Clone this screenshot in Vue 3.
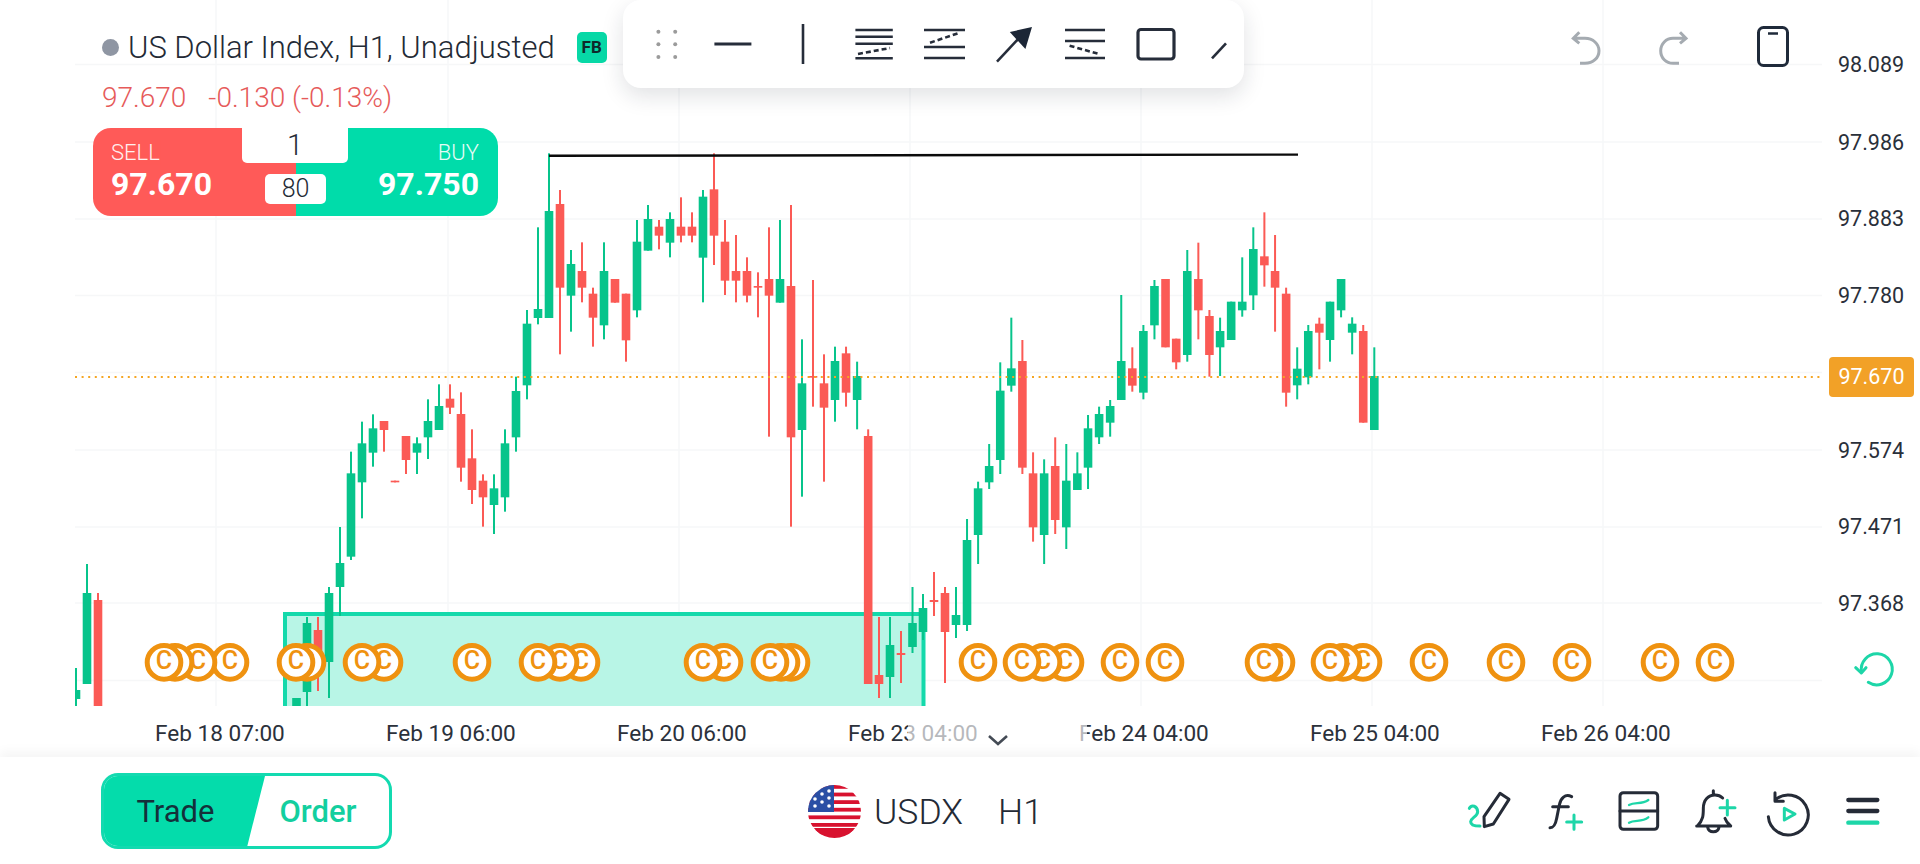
<script setup>
const z9 = [
[33,'g',935,1000,1250,1260],[66,'g',845,910,1027,1135],[99,'g',823,865,938,980],[132,'r',843,843,870,935],[165,'r',1022,1022,1027,1027],[198,'r',888,888,960,1002],[231,'g',892,910,938,1002],[264,'g',778,843,892,957],[297,'g',733,798,870,870],[330,'r',733,776,803,822],[363,'r',757,822,983,1025],[396,'r',868,955,1050,1092],[429,'r',1003,1022,1072,1160],[462,'g',1003,1045,1095,1182],[495,'g',868,910,1072,1115],[528,'g',710,753,892,935],[561,'g',510,551,736,778],[594,'g',262,507,534,553],[627,'g',40,213,534,534],[660,'r',150,192,443,643],[693,'g',330,372,467,575],[726,'r',307,393,443,487],[759,'r',443,461,533,620],[792,'g',307,393,556,598],[825,'r',417,417,488,488],[858,'r',461,461,601,665],[891,'g',240,305,511,532],[924,'g',195,237,332,332],[957,'r',240,260,287,328],[990,'g',217,237,308,352],[1023,'r',172,260,287,307],[1056,'r',217,260,287,307],[1089,'g',150,170,353,487],[1122,'r',40,148,287,375],[1155,'r',240,305,422,465],[1188,'r',285,393,422,487],[1221,'r',352,393,467,487],[1254,'r',397,438,443,532],[1287,'r',262,417,467,890],[1320,'g',240,417,488,488],[1353,'r',195,438,892,1160],[1386,'g',598,730,870,1070],[1419,'r',420,708,713,800],[1452,'r',643,730,803,1025],[1485,'g',620,663,780,845]
]
const z10 = [
[167,'r',620,640,758,800],[195,'g',665,708,780,868],[223,'r',868,888,1632,1632],
[473,'g',1137,1200,1455,1473],[501,'g',1025,1045,1185,1272],[529,'g',912,978,1027,1047],[557,'g',667,752,960,1002],[585,'g',533,685,737,755],[613,'r',600,663,983,1002],[640,'r',937,1000,1162,1205],[668,'g',958,1000,1185,1272],[696,'r',892,978,1140,1182],[724,'g',912,1022,1162,1227],[752,'g',937,1000,1050,1050],[779,'g',825,865,983,1047],[807,'g',800,822,892,912],[835,'g',780,798,848,890],[863,'g',465,663,780,780],[891,'r',622,685,737,755],[919,'g',555,573,758,778],[947,'g',420,438,556,598],[975,'r',417,417,622,622],[1002,'r',596,596,667,688],[1030,'g',330,393,645,665],[1058,'r',308,417,511,598],[1086,'r',510,528,645,710],[1113,'g',533,573,622,708],[1141,'g',485,485,600,600],[1169,'g',352,485,511,530],[1197,'g',262,327,466,510],[1225,'r',217,349,376,440],[1252,'r',285,393,443,575],[1280,'r',443,461,758,800],[1308,'g',622,686,736,778],[1336,'g',555,573,712,733],[1364,'r',533,551,578,688],[1391,'g',485,485,600,665],[1419,'g',417,417,511,532],[1447,'g',532,551,578,643],[1475,'r',555,573,848,848],[1503,'g',622,708,870,870]
]
const direct = [
[76,'g',668,690,699,706],[87,'g',564,593,684,684],[98,'r',593,600,706,706],
[296.5,'g',698,698,706,706],[307,'g',617,623,692,706],[318,'r',617,630,660,691],[329,'g',587,593,662,698],[340,'g',527,563,587,616],
[879,'r',617,675,684,698],[890,'g',617,645,677,698],[901,'r',631,653,655,683],[912.5,'g',587,623,647,653],[923,'g',594,608,632,640],[934,'r',572,600,602,616],[945,'r',587,593,632,683],[956,'g',587,615,625,638]
]
const toC = ([x, c, wt, bt, bb, wb]) => ({ x, c, wt, bt, bb, wb })
const candles = [
  ...direct.map(toC),
  ...z9.map(([zx, c, a, b, d, e]) => toC([340 + zx / 3, c, 140 + a / 3, 140 + b / 3, 140 + d / 3, 140 + e / 3])),
  ...z10.map(([zx, c, a, b, d, e]) => toC([780 + zx / 2.529, c, 140 + a / 3, 140 + b / 3, 140 + d / 3, 140 + e / 3]))
]
const colors = { g: '#07c48b', r: '#fb5a55' }
const hGrid = [64.5, 142, 219, 295.5, 372.5, 450, 527, 603, 680.5]
const vGrid = [216, 448, 679, 910, 1141, 1372, 1603]
const prices = [['98.089', 64], ['97.986', 142], ['97.883', 218], ['97.780', 295], ['97.574', 450], ['97.471', 526], ['97.368', 603]]
const dates = [['Feb 18 07:00', 155], ['Feb 19 06:00', 386], ['Feb 20 06:00', 617], ['Feb 23 04:00', 848], ['Feb 24 04:00', 1079], ['Feb 25 04:00', 1310], ['Feb 26 04:00', 1541]]
const marks = [164, 175, 198, 230, 296, 307, 362, 384, 472, 538, 560, 581, 703, 724, 770, 781, 791, 978, 1022, 1043, 1065, 1120, 1165, 1264, 1276, 1330, 1343, 1363, 1429, 1506, 1572, 1660, 1715].reverse()
const flagStripes = [0, 1, 2, 3, 4, 5, 6]
</script>

<template>
  <div class="page">
    <section class="chart">
      <svg class="plot" width="1920" height="757" viewBox="0 0 1920 757">
        <defs>
          <clipPath id="plot-area"><rect x="75" y="0" width="1747" height="706" /></clipPath>
        </defs>
        <g class="grid">
          <line v-for="y in hGrid" :key="'h' + y" x1="75" x2="1822" :y1="y" :y2="y" />
          <line v-for="x in vGrid" :key="'v' + x" :x1="x" :x2="x" y1="0" y2="706" />
        </g>
        <g clip-path="url(#plot-area)">
          <rect class="zone" x="285" y="614" width="638.5" height="100" />
          <g v-for="(k, i) in candles" :key="i" :fill="colors[k.c]">
            <rect :x="k.x - 1" :y="k.wt" width="2" :height="k.wb - k.wt" />
            <rect :x="k.x - 4.3" :y="k.bt" width="8.6" :height="k.bb - k.bt" />
          </g>
          <line class="hline" x1="549" y1="155.8" x2="1298" y2="154.6" />
          <line class="last" x1="75" x2="1822" y1="377" y2="377" />
          <g v-for="(x, i) in marks" :key="'m' + i">
            <circle class="mark" :cx="x" cy="662.4" r="16.8" />
            <text class="mark-c" :x="x" y="669.3">C</text>
          </g>
        </g>
        <text v-for="p in prices" :key="p[0]" class="price" x="1838" :y="p[1] + 7.5">{{ p[0] }}</text>
        <text v-for="d in dates" :key="d[0]" class="date" :x="d[1]" y="740.8">{{ d[0] }}</text>
        <g class="reset">
          <path d="M1861.5 672 A15.5 15.5 0 1 1 1868.3 682.3" />
          <path d="M1855.7 667.7 L1861.3 673 L1866 667.7" />
        </g>
      </svg>

      <div class="legend">
        <div class="title">
          <span class="dot"></span>
          <span class="name">US Dollar Index, H1, Unadjusted</span>
          <span class="fb">FB</span>
        </div>
        <div class="change"><span>97.670</span><span>-0.130 (-0.13%)</span></div>
        <div class="trade">
          <div class="side sell"><small>SELL</small><b>97.670</b></div>
          <div class="side buy"><small>BUY</small><b>97.750</b></div>
          <div class="lot">1</div>
          <div class="spread">80</div>
        </div>
      </div>

      <svg class="tools" width="621" height="88" viewBox="623 0 621 88">
        <g fill="#9b9b9b">
          <circle cx="658.4" cy="31.7" r="2" /><circle cx="675.2" cy="31.7" r="2" />
          <circle cx="658.4" cy="44.3" r="2" /><circle cx="675.2" cy="44.3" r="2" />
          <circle cx="658.4" cy="57" r="2" /><circle cx="675.2" cy="57" r="2" />
        </g>
        <g class="ink">
          <path class="bold" d="M714.4 44H751.4" />
          <path d="M803 24V64" />
          <path d="M855.4 30H892.8M855.4 36.7H892.8M855.4 43.7H892.8M855.4 58.3H892.8" />
          <path class="dash" d="M858 54L890 48" />
          <path d="M924 30H965M924 47H965M924 58H965" />
          <path class="dash" d="M930 42.7L959 33" />
          <path d="M997 61.7L1020 37" />
          <path class="solid" d="M1009.8 32L1032 27L1025.4 49Z" />
          <path d="M1065 30H1105M1065 41H1105M1065 58H1105" />
          <path class="dash" d="M1069.6 45.7L1100 54.3" />
          <rect class="bold" x="1138" y="29.5" width="36" height="29.5" rx="3" />
          <path d="M1212 58.3L1226 43.3" />
        </g>
      </svg>

      <svg class="history" width="140" height="40" viewBox="1560 27 140 40">
        <g class="soft">
          <path d="M1579.3 32.3L1573.3 38.3L1579.3 43.3M1573.3 38.3H1585C1593 38.3 1599 44 1599 50.7C1599 58 1593 63.3 1585 63.3H1580" />
          <path d="M1680 32.3L1686 38.3L1680 43.3M1686 38.3H1673C1666 38.3 1660.7 44 1660.7 50.7C1660.7 58 1666 63.3 1673 63.3H1679" />
        </g>
      </svg>
      <svg class="phone" width="32" height="41" viewBox="0 0 32 41">
        <rect x="1.5" y="1.5" width="29" height="38" rx="5" fill="none" stroke="#1f2a3a" stroke-width="3" />
        <path d="M11 7.5H21" stroke="#1f2a3a" stroke-width="2.5" />
      </svg>

      <div class="badge">97.670</div>
      <div class="handle">
        <svg width="22" height="12" viewBox="0 0 22 12"><path d="M2 2L11 10L20 2" fill="none" stroke="#444b55" stroke-width="2.6" /></svg>
      </div>
    </section>

    <footer class="bar">
      <div class="toggle">
        <div class="seg seg-trade"><span>Trade</span></div>
        <div class="seg seg-order"><span>Order</span></div>
      </div>
      <div class="symbol">
        <svg width="53" height="53" viewBox="0 0 53 53">
          <defs><clipPath id="flag"><ellipse cx="26.5" cy="26.5" rx="26.5" ry="26.5" /></clipPath></defs>
          <g clip-path="url(#flag)">
            <rect width="53" height="53" fill="#fff" />
            <rect v-for="s in flagStripes" :key="s" x="0" :y="s * 7.6" width="53" height="3.8" fill="#d8122f" />
            <rect x="0" y="43" width="53" height="10" fill="#d8122f" />
            <rect x="0" y="0" width="26" height="27" fill="#2a4fa5" />
            <g fill="#fff">
              <circle cx="21" cy="6" r="1.8" /><circle cx="14" cy="9" r="1.8" /><circle cx="21" cy="13" r="1.8" />
              <circle cx="7" cy="14" r="1.8" /><circle cx="14" cy="17" r="1.8" /><circle cx="21" cy="21" r="1.8" /><circle cx="7" cy="21" r="1.8" />
            </g>
          </g>
        </svg>
        <span class="sym">USDX</span>
        <span class="tf">H1</span>
      </div>
      <svg class="actions" width="480" height="107" viewBox="0 51 1440 321">
        <g class="dark">
          <path d="M180 160L207 178L160 252L133 260L132 230Z" />
          <path d="M395 170C375 160 362 175 358 195L350 235C346 258 340 263 330 263M338 200H385" />
          <rect x="540" y="158" width="113" height="110" rx="10" />
          <path d="M540 213H653" />
          <path d="M772 258C790 240 790 225 790 205C790 180 805 165 825 165C835 165 842 168 848 174M855 235C858 245 865 252 872 258M770 258H872M820 152V165M803 262C806 280 834 280 837 262" />
          <path d="M1005 180A60 60 0 1 1 985 230M1005 158V184H1030" />
          <path class="bar-line" d="M1225 180H1312M1225 213H1312" />
        </g>
        <g class="accent">
          <path d="M88 205C95 192 112 198 113 215C113 230 93 232 92 245C92 256 105 258 120 258" />
          <path d="M380 246H425M402 225V268" />
          <path class="thin" d="M567 195C585 185 605 195 625 180M567 248C585 238 605 248 625 232" />
          <path d="M840 203H885M862 181V225" />
          <path d="M1033 205L1065 222L1033 240Z" />
          <path class="bar-line" d="M1225 248H1312" />
        </g>
      </svg>
    </footer>
  </div>
</template>

<style scoped>
.page {
  width: 1920px;
  height: 864px;
  background: #fff;
  overflow: hidden;
  font-family: Roboto, "Liberation Sans", sans-serif;
  color: #232a35;
}
.chart {
  position: relative;
  height: 757px;
}
.plot {
  display: block;
}
.grid line {
  stroke: #f6f7f8;
  stroke-width: 1.5;
}
.zone {
  fill: #b8f5e6;
  stroke: #14d9ab;
  stroke-width: 4;
}
.hline {
  stroke: #0b0b0b;
  stroke-width: 2.4;
}
.last {
  stroke: #f5a623;
  stroke-width: 2;
  stroke-dasharray: 2 4.6;
}
.mark {
  fill: #fff;
  stroke: #ef9210;
  stroke-width: 5;
}
.mark-c {
  fill: #ef9210;
  font-size: 25px;
  font-weight: 500;
  text-anchor: middle;
}
.price {
  fill: #2a303a;
  font-size: 21.5px;
  font-weight: 400;
}
.date {
  fill: #2b313b;
  font-size: 22.6px;
  font-weight: 400;
}
.reset path {
  fill: none;
  stroke: #1dd6a8;
  stroke-width: 3;
  stroke-linecap: round;
  stroke-linejoin: round;
}
.legend {
  position: absolute;
  left: 93px;
  top: 27px;
  width: 520px;
}
.title {
  display: flex;
  align-items: center;
  height: 40px;
  padding-left: 9px;
}
.dot {
  width: 17px;
  height: 17px;
  border-radius: 50%;
  background: #8f96a3;
  margin-right: 9px;
}
.name {
  font-size: 31px;
  font-weight: 300;
  color: #232a35;
  white-space: nowrap;
}
.fb {
  width: 30px;
  height: 31px;
  margin-left: 22px;
  border-radius: 5px;
  background: #07d8a6;
  color: #0e2a2b;
  font-size: 17px;
  font-weight: 700;
  display: flex;
  align-items: center;
  justify-content: center;
}
.change {
  display: flex;
  gap: 22px;
  margin-top: 13px;
  padding-left: 9px;
  height: 36px;
  line-height: 36px;
  font-size: 28px;
  font-weight: 300;
  color: #e65a5a;
}
.trade {
  position: relative;
  display: flex;
  width: 405px;
  height: 88px;
  margin-top: 12px;
  border-radius: 18px;
  overflow: hidden;
  color: #fff;
}
.side {
  flex: 1;
  display: flex;
  flex-direction: column;
  padding: 12px 19px 0 18px;
}
.side small {
  font-size: 22px;
  font-weight: 300;
  line-height: 26px;
  opacity: .9;
}
.side b {
  font-size: 32px;
  font-weight: 700;
  line-height: 36px;
}
.sell {
  background: #ff5a58;
}
.buy {
  background: #00dcaa;
  text-align: right;
}
.lot {
  position: absolute;
  left: 149px;
  top: 0;
  width: 106px;
  height: 35px;
  background: #fff;
  border-radius: 0 0 5px 5px;
  color: #232a35;
  font-size: 29px;
  font-weight: 300;
  line-height: 35px;
  text-align: center;
}
.spread {
  position: absolute;
  left: 172px;
  top: 46px;
  width: 61px;
  height: 30px;
  background: #fff;
  border-radius: 5px;
  color: #232a35;
  font-size: 25px;
  font-weight: 300;
  line-height: 30px;
  text-align: center;
}
.tools {
  position: absolute;
  left: 623px;
  top: 0;
  background: #fff;
  border-radius: 18px;
  box-shadow: 0 8px 22px rgba(20, 30, 50, .13);
}
.ink path,
.ink rect {
  fill: none;
  stroke: #262d3a;
  stroke-width: 2.6;
}
.ink .bold {
  stroke-width: 3.2;
}
.ink .solid {
  fill: #1c2636;
  stroke: none;
}
.ink .dash {
  stroke-dasharray: 5 3;
}
.history {
  position: absolute;
  left: 1560px;
  top: 27px;
}
.soft path {
  fill: none;
  stroke: #a5abb1;
  stroke-width: 3;
}
.phone {
  position: absolute;
  left: 1757px;
  top: 26px;
}
.badge {
  position: absolute;
  left: 1829px;
  top: 357px;
  width: 85px;
  height: 40px;
  background: #f2a127;
  border-radius: 4px;
  color: #fff;
  font-size: 21.5px;
  font-weight: 400;
  line-height: 39px;
  text-align: center;
}
.handle {
  position: absolute;
  left: 908px;
  top: 719px;
  width: 179px;
  height: 38px;
  background: rgba(255, 255, 255, .66);
  display: flex;
  justify-content: center;
  padding: 15px 0 0 0;
  box-sizing: border-box;
}
.bar {
  position: relative;
  height: 107px;
  display: flex;
  align-items: flex-start;
  padding-left: 101px;
  background: #fff;
  box-shadow: 0 -6px 10px rgba(0, 0, 0, .04);
}
.toggle {
  display: flex;
  width: 291px;
  height: 76px;
  margin-top: 16px;
  box-sizing: border-box;
  border: 3px solid #13dab0;
  border-radius: 17px;
  overflow: hidden;
}
.seg {
  display: flex;
  align-items: center;
  justify-content: center;
  font-size: 31px;
  font-weight: 400;
}
.seg-trade {
  width: 161px;
  margin-right: -18px;
  padding-right: 18px;
  box-sizing: border-box;
  background: #04dcab;
  color: #14303a;
  clip-path: polygon(0 0, 100% 0, 89% 100%, 0 100%);
}
.seg-order {
  flex: 1;
  color: #13cf9f;
  font-weight: 500;
}
.symbol {
  display: flex;
  align-items: center;
  margin-left: 416px;
  margin-top: 28px;
  height: 53px;
  font-size: 35.5px;
  font-weight: 300;
  color: #232a35;
}
.sym {
  margin-left: 13px;
}
.tf {
  margin-left: 35px;
}
.actions {
  margin-left: auto;
}
.dark path,
.dark rect {
  fill: none;
  stroke: #252b37;
  stroke-width: 9;
  stroke-linecap: round;
  stroke-linejoin: round;
}
.accent path {
  fill: none;
  stroke: #1dd6a8;
  stroke-width: 9;
  stroke-linecap: round;
  stroke-linejoin: round;
}
.dark .bar-line,
.accent .bar-line {
  stroke-width: 13;
}
.accent .thin {
  stroke-width: 7;
}
</style>
